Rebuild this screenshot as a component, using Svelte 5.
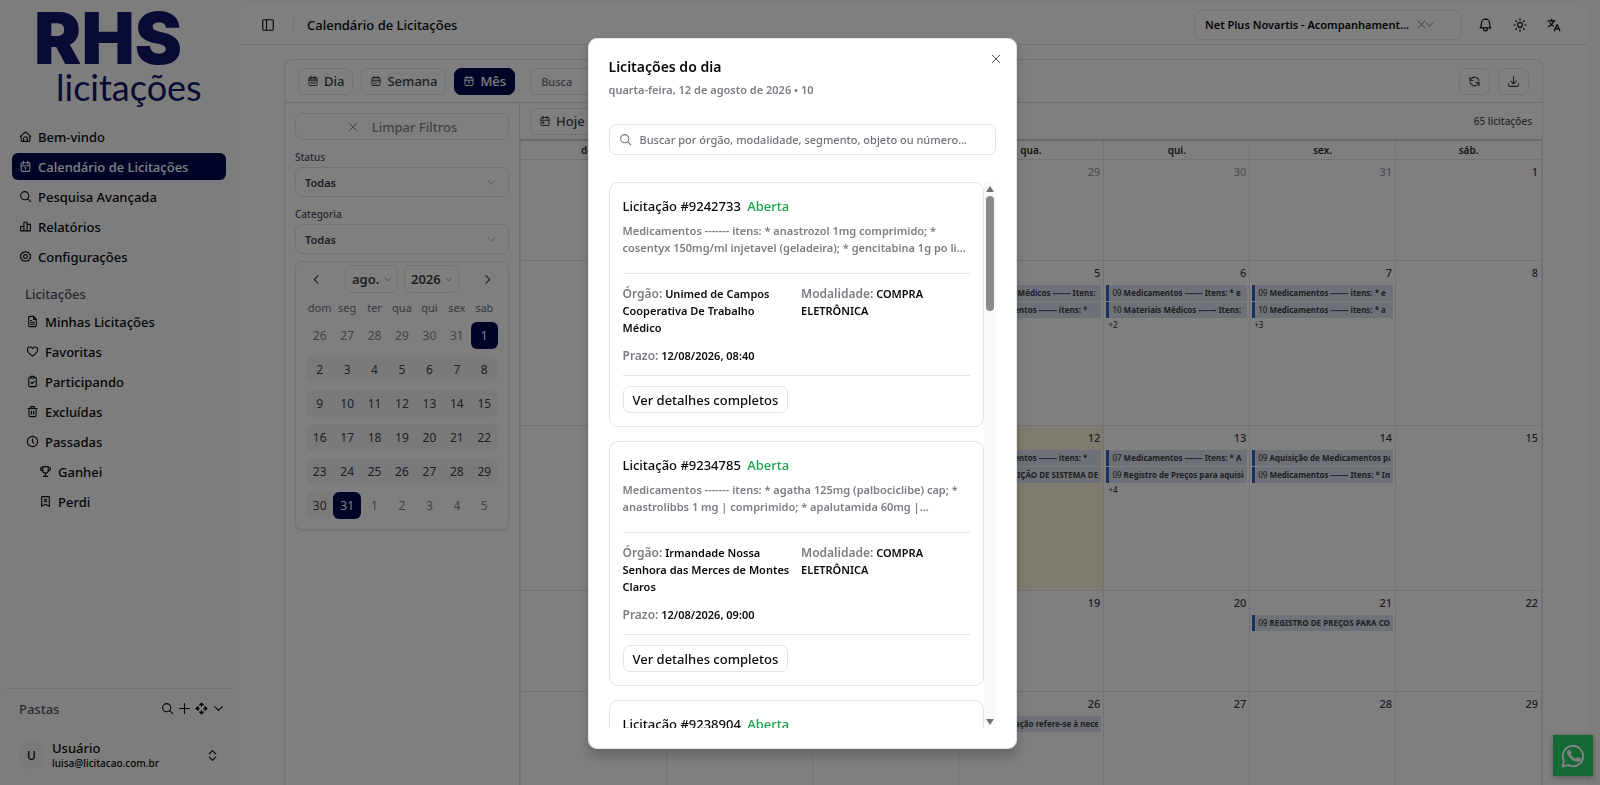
<script lang="ts">
  interface Bid {
    id: string;
    status: string;
    summary: string;
    agency: string;
    modality: string;
    deadline: string;
  }

  interface Day {
    n: number;
    out?: boolean;
    today?: boolean;
    events?: string[];
    more?: number;
  }

  const icons: Record<string, string> = {
    home: 'M4 10.5 12 3.5l8 7V19a2 2 0 0 1-2 2H6a2 2 0 0 1-2-2zM2.500 12 4 10.500M21.500 12 20 10.500M8.500 21v-5a3.500 3.500 0 0 1 7 0v5',
    calendar: 'M6 5h12a2 2 0 0 1 2 2v12a2 2 0 0 1-2 2H6a2 2 0 0 1-2-2V7a2 2 0 0 1 2-2zM8 2.500v5M16 2.500v5M4 10.500h16M12 14v3M11 14h1.500',
    day: 'M6 5h12a2 2 0 0 1 2 2v12a2 2 0 0 1-2 2H6a2 2 0 0 1-2-2V7a2 2 0 0 1 2-2zM8 2.500v4M16 2.500v4M4 8h16M4 10.500h16M8.500 14v3M12 14v3M15.500 14v3',
    week: 'M6 5h12a2 2 0 0 1 2 2v12a2 2 0 0 1-2 2H6a2 2 0 0 1-2-2V7a2 2 0 0 1 2-2zM8 2.500v5M16 2.500v5M4 10.500h16M7.500 14h1M11.500 14h1M15.500 14h1M7.500 17.500h1M11.500 17.500h1',
    today: 'M6 5h12a2 2 0 0 1 2 2v12a2 2 0 0 1-2 2H6a2 2 0 0 1-2-2V7a2 2 0 0 1 2-2zM8 2.500v5M16 2.500v5M4 10.500h16M8 14h2v2.500H8z',
    search: 'M10.500 3a7.500 7.500 0 1 1 0 15 7.500 7.500 0 0 1 0-15zM16 16l5.500 5.500',
    chart: 'M3 12h6v8H3zM9 4h6v16H9zM15 8h6v12h-6z',
    gear: 'M12 2.500l2.600 2 3.200-.3 1 3.100 2.700 1.800-1 2.900 1 2.900-2.700 1.800-1 3.100-3.200-.3-2.600 2-2.600-2-3.200.3-1-3.100-2.700-1.800 1-2.900-1-2.900 2.700-1.800 1-3.100 3.200.3zM12 8.500a3.500 3.500 0 1 1 0 7 3.500 3.500 0 0 1 0-7z',
    file: 'M14 2.500H7a2 2 0 0 0-2 2v15a2 2 0 0 0 2 2h10a2 2 0 0 0 2-2v-12zM14 2.500V8h5M8.500 10h2M8.500 13.500h7M8.500 17h7',
    heart: 'M12 20.500C5 15.500 2.500 12.500 2.500 8.800A5 5 0 0 1 12 6.500a5 5 0 0 1 9.500 2.300C21.500 12.500 19 15.500 12 20.500z',
    clipboard: 'M8.500 4H7a2 2 0 0 0-2 2v13.500a2 2 0 0 0 2 2h10a2 2 0 0 0 2-2V6a2 2 0 0 0-2-2h-1.500M9 2.500h6V6H9zM9 13.500l2.200 2.200 4-4',
    trash: 'M3.500 6.500h17M8.500 6V3h7v3M5.500 7v12.500a2 2 0 0 0 2 2h9a2 2 0 0 0 2-2V7M10 11v6M14 11v6',
    clock: 'M12 2.500a9.500 9.500 0 1 1 0 19 9.500 9.500 0 0 1 0-19zM12 7v5.500l2.500 3',
    trophy: 'M7 3h10v7a5 5 0 0 1-10 0zM7 5H3v2a4 4 0 0 0 4 4M17 5h4v2a4 4 0 0 1-4 4M12 15v5M8 21h8',
    bookmark: 'M5 3h14v18l-7-4-7 4zM9.500 7.500l5 5M14.500 7.500l-5 5',
    plus: 'M12 3v18M3 12h18',
    move: 'M12 2v6M12 16v6M2 12h6M16 12h6M8.500 5.500 12 2l3.500 3.500zM8.500 18.500 12 22l3.500-3.500zM5.500 8.500 2 12l3.500 3.500zM18.500 8.500 22 12l-3.500 3.500z',
    down: 'M5 8.500l7 7 7-7',
    left: 'M15 5l-7 7 7 7',
    right: 'M9 5l7 7-7 7',
    updown: 'M6 9l6-6 6 6M6 15l6 6 6-6',
    close: 'M4.500 4.500l15 15M19.500 4.500l-15 15',
    panel: 'M5 3h14a2 2 0 0 1 2 2v14a2 2 0 0 1-2 2H5a2 2 0 0 1-2-2V5a2 2 0 0 1 2-2zM9.500 3v18',
    bell: 'M3.500 17.500h17c-1.500-1.700-2-3.500-2-7.500a6.500 6.500 0 0 0-13 0c0 4-.5 5.800-2 7.500zM9 18v1a3 3 0 0 0 6 0v-1',
    sun: 'M12 8a4 4 0 1 1 0 8 4 4 0 0 1 0-8zM12 1.500v2.500M12 20v2.500M1.500 12H4M20 12h2.500M4.600 4.600l1.700 1.700M17.700 17.700l1.700 1.700M4.600 19.400l1.700-1.700M17.700 6.300l1.700-1.700',
    translate: 'M2 5h12M8 2v3M11.500 5C10 10 7 13 2.500 15M5 8c1.500 3 4 5 6.500 6M12.500 22l4.700-11 4.800 11M14 18.500h6.500',
    refresh: 'M20 11A8 8 0 0 0 5.500 7.500L3.500 10M3.500 4.500V10H9M4 13a8 8 0 0 0 14.500 3.500l2-2.500M20.500 19.500V14H15',
    download: 'M12 3v13M7 11.500l5 5 5-5M3 16v3a2 2 0 0 0 2 2h14a2 2 0 0 0 2-2v-3',
  };

  const mainNav = [
    { icon: 'home', label: 'Bem-vindo' },
    { icon: 'calendar', label: 'Calendário de Licitações', active: true },
    { icon: 'search', label: 'Pesquisa Avançada' },
    { icon: 'chart', label: 'Relatórios' },
    { icon: 'gear', label: 'Configurações' },
  ];

  const bidNav = [
    { icon: 'file', label: 'Minhas Licitações' },
    { icon: 'heart', label: 'Favoritas' },
    { icon: 'clipboard', label: 'Participando' },
    { icon: 'trash', label: 'Excluídas' },
    { icon: 'clock', label: 'Passadas' },
    { icon: 'trophy', label: 'Ganhei', nested: true },
    { icon: 'bookmark', label: 'Perdi', nested: true },
  ];

  const folderActions = [
    { icon: 'search', label: 'Buscar pasta' },
    { icon: 'plus', label: 'Nova pasta' },
    { icon: 'move', label: 'Mover pasta' },
    { icon: 'down', label: 'Expandir pastas' },
  ];

  const views = [
    { icon: 'day', label: 'Dia' },
    { icon: 'week', label: 'Semana' },
    { icon: 'calendar', label: 'Mês' },
  ];

  const miniHead = ['dom', 'seg', 'ter', 'qua', 'qui', 'sex', 'sab'];
  const monthHead = ['dom.', 'seg.', 'ter.', 'qua.', 'qui.', 'sex.', 'sáb.'];

  // six weeks starting on Sunday, 26 July 2026
  const start = new Date(2026, 6, 26);
  const miniWeeks = Array.from({ length: 6 }, (_, w) =>
    Array.from({ length: 7 }, (_, d) => {
      const date = new Date(start.getFullYear(), start.getMonth(), start.getDate() + w * 7 + d);
      const n = date.getDate();
      const out = date.getMonth() !== 7;
      return { n, out, edge: !out && (n === 1 || n === 31) };
    }),
  );

  const plain = (from: number, to: number): Day[] =>
    Array.from({ length: to - from + 1 }, (_, i) => ({ n: from + i }));

  const weeks: { tall?: boolean; days: Day[] }[] = [
    { days: [...plain(26, 31).map((d) => ({ ...d, out: true })), { n: 1 }] },
    {
      tall: true,
      days: [
        ...plain(2, 4),
        { n: 5, events: ['09 Materiais Médicos ------- Itens: *', '09 Medicamentos ------- itens: *'] },
        { n: 6, events: ['09 Medicamentos ------- Itens: * e', '10 Materiais Médicos ------- Itens: *'], more: 2 },
        { n: 7, events: ['09 Medicamentos ------- itens: * e', '10 Medicamentos ------- itens: * a'], more: 3 },
        { n: 8 },
      ],
    },
    {
      tall: true,
      days: [
        ...plain(9, 11),
        { n: 12, today: true, events: ['08 Medicamentos ------- itens: *', '09 NA AQUISIÇÃO DE SISTEMA DE'] },
        { n: 13, events: ['07 Medicamentos ------- Itens: * A', '09 Registro de Preços para aquisição'], more: 4 },
        { n: 14, events: ['09 Aquisição de Medicamentos para', '09 Medicamentos ------- Itens: * Im'] },
        { n: 15 },
      ],
    },
    { days: [...plain(16, 20), { n: 21, events: ['09 REGISTRO DE PREÇOS PARA CONTRATAÇÃO'] }, { n: 22 }] },
    { days: [...plain(23, 25), { n: 26, events: ['09 A contratação refere-se à necessidade'] }, ...plain(27, 29)] },
  ];

  const bids: Bid[] = [
    {
      id: '9242733',
      status: 'Aberta',
      summary: 'Medicamentos ------- itens: * anastrozol 1mg comprimido; * cosentyx 150mg/ml injetavel (geladeira); * gencitabina 1g po li...',
      agency: 'Unimed de Campos Cooperativa De Trabalho Médico',
      modality: 'COMPRA ELETRÔNICA',
      deadline: '12/08/2026, 08:40',
    },
    {
      id: '9234785',
      status: 'Aberta',
      summary: 'Medicamentos ------- itens: * agatha 125mg (palbociclibe) cap; * anastrolibbs 1 mg | comprimido; * apalutamida 60mg |...',
      agency: 'Irmandade Nossa Senhora das Merces de Montes Claros',
      modality: 'COMPRA ELETRÔNICA',
      deadline: '12/08/2026, 09:00',
    },
    {
      id: '9238904',
      status: 'Aberta',
      summary: '',
      agency: '',
      modality: '',
      deadline: '',
    },
  ];

  let view = $state('Mês');
  let open = $state(true);
  let query = $state('');

  let visible = $derived(
    bids.filter((b) =>
      [b.id, b.summary, b.agency, b.modality].some((s) => s.toLowerCase().includes(query.toLowerCase())),
    ),
  );
</script>

{#snippet icon(name: string)}
  <svg class="icon" viewBox="0 0 24 24" fill="none" stroke="currentColor" stroke-width="2" stroke-linejoin="round" stroke-linecap="round" aria-hidden="true">
    <path d={icons[name]} />
  </svg>
{/snippet}

<div class="app">
  <aside class="sidebar">
    <div class="logo">
      <span class="logo-main">RHS</span>
      <span class="logo-sub">licitações</span>
    </div>

    <nav class="nav">
      {#each mainNav as item}
        <a href="#{item.icon}" class="nav-item" class:active={item.active}>
          {@render icon(item.icon)}
          {item.label}
        </a>
      {/each}
    </nav>

    <div class="nav-title">Licitações</div>
    <nav class="nav sub">
      {#each bidNav as item}
        <a href="#{item.icon}" class="nav-item" class:nested={item.nested}>
          {@render icon(item.icon)}
          {item.label}
        </a>
      {/each}
    </nav>

    <div class="folders">
      <span class="folders-title">Pastas</span>
      {#each folderActions as action}
        <button class="bare" aria-label={action.label}>{@render icon(action.icon)}</button>
      {/each}
    </div>

    <button class="user">
      <span class="avatar">U</span>
      <span class="user-text">
        <span class="user-name">Usuário</span>
        <span class="user-mail">luisa@licitacao.com.br</span>
      </span>
      {@render icon('updown')}
    </button>
  </aside>

  <main class="main">
    <header class="topbar">
      <button class="bare" aria-label="Alternar menu">{@render icon('panel')}</button>
      <span class="sep"></span>
      <h1>Calendário de Licitações</h1>
      <div class="profile">
        <select aria-label="Perfil">
          <option>Net Plus Novartis - Acompanhament...</option>
        </select>
        <button class="bare clear" aria-label="Limpar perfil">{@render icon('close')}</button>
        <span class="profile-caret">{@render icon('down')}</span>
      </div>
      <button class="bare big" aria-label="Notificações">{@render icon('bell')}</button>
      <button class="bare" aria-label="Tema">{@render icon('sun')}</button>
      <button class="bare" aria-label="Idioma">{@render icon('translate')}</button>
    </header>

    <section class="board">
      <div class="toolbar">
        {#each views as v}
          <button class="btn" class:primary={view === v.label} onclick={() => (view = v.label)}>
            {@render icon(v.icon)}
            {v.label}
          </button>
        {/each}
        <input class="search" type="text" placeholder="Busca" aria-label="Busca" />
        <span class="grow"></span>
        <button class="btn square" aria-label="Atualizar">{@render icon('refresh')}</button>
        <button class="btn square" aria-label="Baixar">{@render icon('download')}</button>
      </div>

      <div class="board-body">
        <div class="filters">
          <button class="btn reset">{@render icon('close')} Limpar Filtros</button>

          {#each ['Status', 'Categoria'] as name}
            <div class="field">
              <label for={name}>{name}</label>
              <div class="select">
                <select id={name}>
                  <option>Todas</option>
                </select>
                {@render icon('down')}
              </div>
            </div>
          {/each}

          <div class="mini">
            <div class="mini-nav">
              <button class="bare" aria-label="Mês anterior">{@render icon('left')}</button>
              <div class="select small">
                <select aria-label="Mês"><option>ago.</option></select>
                {@render icon('down')}
              </div>
              <div class="select small">
                <select aria-label="Ano"><option>2026</option></select>
                {@render icon('down')}
              </div>
              <button class="bare" aria-label="Próximo mês">{@render icon('right')}</button>
            </div>
            <table class="mini-table">
              <thead>
                <tr>
                  {#each miniHead as d}
                    <th>{d}</th>
                  {/each}
                </tr>
              </thead>
              <tbody>
                {#each miniWeeks as week}
                  <tr>
                    {#each week as day}
                      <td>
                        <button class="mini-day" class:out={day.out} class:edge={day.edge}>{day.n}</button>
                      </td>
                    {/each}
                  </tr>
                {/each}
              </tbody>
            </table>
          </div>
        </div>

        <div class="month">
          <div class="month-bar">
            <button class="btn">{@render icon('today')} Hoje</button>
            <span class="count">65 licitações</span>
          </div>
          <table class="month-table">
            <thead>
              <tr>
                {#each monthHead as d}
                  <th>{d}</th>
                {/each}
              </tr>
            </thead>
            <tbody>
              {#each weeks as week}
                <tr class:tall={week.tall}>
                  {#each week.days as day}
                    <td class:today={day.today}>
                      <div class="day-n" class:out={day.out}>{day.n}</div>
                      {#each day.events ?? [] as ev}
                        <div class="event"><span>{ev.slice(0, 2)}</span>{ev.slice(2)}</div>
                      {/each}
                      {#if day.more}
                        <div class="more">+{day.more}</div>
                      {/if}
                    </td>
                  {/each}
                </tr>
              {/each}
            </tbody>
          </table>
        </div>
      </div>
    </section>
  </main>

  <a class="whatsapp" href="#whatsapp" aria-label="WhatsApp">
    <svg viewBox="0 0 24 24" fill="none" stroke="currentColor" stroke-width="2" stroke-linejoin="round" aria-hidden="true">
      <path d="M1.500 22.500 3 17A10.200 10.200 0 1 1 7 21z" />
      <path stroke="none" fill="currentColor" d="M8.800 6.400c-.3-.6-.6-.6-.9-.6-.8 0-1.900.9-1.900 2.600s1.200 3.300 1.400 3.500c.2.300 2.400 3.800 5.900 5.100 2.900 1.100 3.500.9 4.100.8.700-.1 2-.8 2.300-1.600.3-.8.3-1.500.2-1.600-.3-.4-2.800-1.600-3.200-1.600-.6 0-1.100 1.800-1.700 1.800-.5 0-4.300-2-5.300-4.700 0-.4 1.100-1.100 1-1.700z" />
    </svg>
  </a>
</div>

{#if open}
  <div class="overlay">
    <div class="modal" role="dialog" aria-modal="true" aria-labelledby="modal-title">
      <button class="bare modal-close" aria-label="Fechar" onclick={() => (open = false)}>
        {@render icon('close')}
      </button>
      <h2 id="modal-title">Licitações do dia</h2>
      <p class="modal-sub">quarta-feira, 12 de agosto de 2026 • 10</p>

      <label class="modal-search">
        {@render icon('search')}
        <input
          type="text"
          bind:value={query}
          aria-label="Buscar licitações"
          placeholder="Buscar por órgão, modalidade, segmento, objeto ou número..."
        />
      </label>

      <div class="modal-body">
        <div class="list">
          {#each visible as bid}
            <article class="card">
              <h3>Licitação #{bid.id} <span class="status">{bid.status}</span></h3>
              <p class="summary">{bid.summary}</p>
              <div class="details">
                <div><span class="key">Órgão:</span> {bid.agency}</div>
                <div><span class="key">Modalidade:</span> {bid.modality}</div>
                <div><span class="key">Prazo:</span> {bid.deadline}</div>
              </div>
              <button class="btn more-btn">Ver detalhes completos</button>
            </article>
          {/each}
        </div>
        <div class="scrollbar" aria-hidden="true">
          <svg viewBox="0 0 8 6"><path d="M4 0l4 6H0z" /></svg>
          <div class="track"><div class="thumb"></div></div>
          <svg viewBox="0 0 8 6"><path d="M4 6l4-6H0z" /></svg>
        </div>
      </div>
    </div>
  </div>
{/if}

<style>
  :global(body) {
    font-family: 'Noto Sans', 'Open Sans', sans-serif;
    font-size: 13px;
    font-weight: 500;
    color: #09090b;
    background: #fafafa;
  }

  * {
    box-sizing: border-box;
  }

  h1,
  h2,
  h3,
  p {
    margin: 0;
  }

  button,
  input,
  select {
    font: inherit;
    color: inherit;
  }

  a {
    color: inherit;
    text-decoration: none;
  }

  .icon {
    width: 13px;
    height: 13px;
    flex-shrink: 0;
  }

  .bare {
    display: flex;
    padding: 0;
    border: none;
    background: none;
    cursor: pointer;
  }

  .app {
    display: flex;
    height: 100vh;
    overflow: hidden;
    background: #fafafa;
  }

  .sidebar {
    display: flex;
    flex-direction: column;
    width: 240px;
    flex-shrink: 0;
    padding: 0 7px 3px 5px;
  }

  .logo {
    display: flex;
    flex-direction: column;
    height: 123px;
    padding-left: 29px;
    color: #14166a;
  }

  .logo-main {
    font-family: Inter, sans-serif;
    font-size: 71px;
    font-weight: 900;
    line-height: 76px;
  }

  .logo-sub {
    padding-left: 22px;
    font-family: Lato, sans-serif;
    font-size: 36px;
    font-weight: 400;
    line-height: 22px;
  }

  .nav {
    display: flex;
    flex-direction: column;
    gap: 3px;
    padding: 0 7px;
  }

  .nav-item {
    display: flex;
    align-items: center;
    gap: 6px;
    height: 27px;
    padding: 0 7px;
    border-radius: 6px;
  }

  .nav-item.active {
    background: #000a50;
    color: #fff;
  }

  .nav.sub {
    padding-left: 14px;
  }

  .nav-item.nested {
    margin-left: 13px;
  }

  .nav-title {
    padding: 14px 20px 4px;
    line-height: 20px;
    color: #52525b;
  }

  .folders {
    display: flex;
    align-items: center;
    gap: 4px;
    margin-top: auto;
    height: 40px;
    padding: 0 8px 0 14px;
    border-top: 1px solid #e4e4e7;
  }

  .folders-title {
    flex: 1;
    color: #52525b;
  }

  .user {
    display: flex;
    align-items: center;
    gap: 7px;
    height: 54px;
    padding: 0 14px 0 13px;
    border: none;
    background: none;
    text-align: left;
  }

  .avatar {
    display: grid;
    place-items: center;
    width: 27px;
    height: 27px;
    border-radius: 7px;
    background: #f4f4f5;
    font-size: 12px;
  }

  .user-text {
    display: flex;
    flex: 1;
    flex-direction: column;
  }

  .user-name {
    line-height: 17px;
  }

  .user-mail {
    font-size: 10px;
    line-height: 13px;
  }

  .main {
    display: flex;
    flex: 1;
    flex-direction: column;
    min-width: 0;
    margin: 5px 13px 0 0;
    border-radius: 8px 8px 0 0;
    background: #fff;
  }

  .topbar {
    display: flex;
    align-items: center;
    gap: 20px;
    height: 40px;
    padding: 0 26px 0 21px;
    border-bottom: 1px solid #e4e4e7;
  }

  .topbar .sep {
    width: 1px;
    height: 14px;
    margin: 0 -7px 0 -2px;
    background: #e4e4e7;
  }

  h1 {
    flex: 1;
    font-size: 13px;
    font-weight: 500;
  }

  .topbar .bare .icon {
    width: 14px;
    height: 14px;
  }

  .topbar .big .icon {
    width: 15px;
    height: 15px;
  }

  .profile {
    display: flex;
    align-items: center;
    width: 268px;
    height: 30px;
    margin-right: -4px;
    padding: 0 26px 0 10px;
    border: 1px solid #e4e4e7;
    border-radius: 7px;
    font-size: 11px;
    font-weight: 600;
  }

  .profile select {
    flex: 1;
    min-width: 0;
    padding: 0;
    border: none;
    background: none;
    appearance: none;
  }

  .profile .clear .icon,
  .profile-caret .icon {
    width: 11px;
    height: 11px;
    color: #71717a;
  }

  .profile-caret {
    display: flex;
    margin-left: -3px;
  }

  .board {
    display: flex;
    flex: 1;
    flex-direction: column;
    min-height: 0;
    margin: 14px 44px 0;
    border: 1px solid #e4e4e7;
    border-bottom: none;
    border-radius: 8px 8px 0 0;
    color: #3f3f46;
  }

  .toolbar {
    display: flex;
    align-items: center;
    gap: 8px;
    height: 43px;
    padding: 0 13px;
    border-bottom: 1px solid #dcdce0;
  }

  .btn {
    display: flex;
    align-items: center;
    justify-content: center;
    gap: 5px;
    height: 27px;
    padding: 0 8px;
    border: 1px solid #e4e4e7;
    border-radius: 7px;
    background: #fff;
    cursor: pointer;
  }

  .btn .icon {
    width: 12px;
    height: 12px;
  }

  .btn.primary {
    border-color: #000a50;
    background: #000a50;
    color: #fff;
  }

  .btn.square {
    width: 31px;
    padding: 0;
  }

  .btn.square .icon {
    width: 13px;
    height: 13px;
  }

  .grow {
    flex: 1;
  }

  .search {
    width: 200px;
    height: 27px;
    margin-left: 7px;
    padding: 0 10px;
    border: 1px solid #e4e4e7;
    border-radius: 7px;
    background: none;
    font-size: 11px;
  }

  .search::placeholder {
    color: #71717a;
  }

  .board-body {
    display: flex;
    flex: 1;
    min-height: 0;
  }

  .filters {
    display: flex;
    flex-direction: column;
    width: 234px;
    flex-shrink: 0;
    padding: 10px;
  }

  .reset {
    gap: 13px;
    color: #85858c;
  }

  .field {
    display: flex;
    flex-direction: column;
    padding-top: 8px;
  }

  .field label {
    font-size: 10px;
    line-height: 19px;
    color: #52525b;
  }

  .select {
    display: flex;
    align-items: center;
    height: 30px;
    padding: 0 11px 0 9px;
    border: 1px solid #e4e4e7;
    border-radius: 7px;
    font-size: 11px;
    font-weight: 600;
  }

  .select select {
    flex: 1;
    min-width: 0;
    padding: 0;
    border: none;
    background: none;
    appearance: none;
  }

  .select .icon {
    width: 11px;
    height: 11px;
    color: #a1a1aa;
  }

  .select.small {
    gap: 3px;
    height: 28px;
    padding: 0 5px 0 6px;
    font-size: 13px;
  }

  .select.small .icon {
    width: 9px;
    height: 9px;
    color: #71717a;
  }

  .mini {
    margin-top: 7px;
    padding: 3px 10px;
    border: 1px solid #e4e4e7;
    border-radius: 7px;
    box-shadow: 0 1px 2px rgba(0, 0, 0, 0.1);
  }

  .mini-nav {
    display: flex;
    align-items: center;
    justify-content: center;
    gap: 6px;
    padding: 0 4px;
  }

  .mini-nav .bare:first-child {
    margin-right: auto;
  }

  .mini-nav .bare:last-child {
    margin-left: auto;
  }

  .mini-table {
    width: 100%;
    border-spacing: 0 7px;
    table-layout: fixed;
    font-size: 12px;
    font-weight: 400;
  }

  .mini-table th {
    padding: 0;
    font-weight: 400;
    font-size: 11px;
    line-height: 15px;
    color: #71717a;
  }

  .mini-table td {
    padding: 0;
    background: #f4f4f5;
  }

  .mini-table td:first-child {
    border-radius: 7px 0 0 7px;
  }

  .mini-table td:last-child {
    border-radius: 0 7px 7px 0;
  }

  .mini-table td:has(.out) {
    background: none;
  }

  .mini-table td:has(.edge) {
    background: none;
  }

  .mini-day {
    width: 100%;
    height: 27px;
    padding: 0;
    border: none;
    border-radius: 6px;
    background: none;
  }

  .mini-day.out {
    color: #85858c;
  }

  .mini-day.edge {
    background: #000a50;
    color: #fff;
  }

  .month {
    display: flex;
    flex: 1;
    flex-direction: column;
    min-width: 0;
    border-left: 1px solid #dcdce0;
  }

  .month-bar {
    display: flex;
    align-items: center;
    justify-content: space-between;
    height: 36px;
    flex-shrink: 0;
    padding: 0 10px;
  }

  .count {
    font-size: 10px;
    color: #52525b;
  }

  .month-table {
    width: 100%;
    border-collapse: collapse;
    table-layout: fixed;
    font-size: 11px;
  }

  .month-table th,
  .month-table td {
    padding: 0;
    border: 1px solid #e6e6e9;
  }

  .month-table th {
    height: 19px;
    border-top: 2px solid #d4d4d8;
    font-size: 10px;
    font-weight: 600;
    color: #27272a;
  }

  .month-table td {
    height: 101px;
    padding: 4px 2px 0;
    vertical-align: top;
  }

  .month-table .tall td {
    height: 165px;
  }

  .month-table .today {
    background: #fff6dc;
  }

  .day-n {
    padding-right: 1px;
    line-height: 16px;
    text-align: right;
  }

  .day-n.out {
    color: #a1a1aa;
  }

  .event {
    height: 16px;
    margin-bottom: 1px;
    border-left: 3px solid #2e62c8;
    border-right: 3px solid #dde5f0;
    padding-left: 3px;
    background: #dde5f0;
    overflow: hidden;
    font-size: 8px;
    font-weight: 700;
    line-height: 16px;
    white-space: nowrap;
  }

  .day-n + .event {
    margin-top: 4px;
  }

  .event span {
    font-weight: 500;
  }

  .more {
    padding-left: 2px;
    font-size: 8px;
    line-height: 12px;
  }

  .whatsapp {
    position: fixed;
    right: 7px;
    bottom: 9px;
    display: grid;
    place-items: center;
    width: 40px;
    height: 41px;
    background: #25d366;
    box-shadow: 0 2px 6px rgba(0, 0, 0, 0.3);
    color: #fff;
  }

  .whatsapp svg {
    width: 24px;
    height: 24px;
  }

  .overlay {
    position: fixed;
    inset: 0;
    display: flex;
    justify-content: center;
    padding: 38px 20px 36px 24px;
    background: rgba(0, 0, 0, 0.5);
  }

  .modal {
    position: relative;
    display: flex;
    flex-direction: column;
    width: 100%;
    max-width: 429px;
    padding: 17px 20px 20px;
    border: 1px solid #e4e4e7;
    border-radius: 9px;
    background: #fff;
    box-shadow: 0 8px 12px rgba(0, 0, 0, 0.2);
  }

  .modal-close {
    position: absolute;
    top: 14px;
    right: 14px;
    color: #52525b;
  }

  .modal-close .icon {
    width: 12px;
    height: 12px;
  }

  h2 {
    font-size: 14px;
    font-weight: 600;
    line-height: 22px;
  }

  .modal-sub {
    font-size: 11px;
    font-weight: 600;
    line-height: 24px;
    color: #7c7c84;
  }

  .modal-search {
    display: flex;
    align-items: center;
    gap: 8px;
    height: 31px;
    flex-shrink: 0;
    margin: 22px 0 27px;
    padding: 0 9px;
    border: 1px solid #e4e4e7;
    border-radius: 7px;
    color: #71717a;
  }

  .modal-search input {
    flex: 1;
    min-width: 0;
    padding: 0;
    border: none;
    outline: none;
    background: none;
    font-size: 11px;
  }

  .modal-search input::placeholder {
    color: #71717a;
  }

  .modal-body {
    display: flex;
    flex: 1;
    min-height: 0;
  }

  .list {
    display: flex;
    flex: 1;
    flex-direction: column;
    gap: 14px;
    overflow: hidden;
  }

  .card {
    flex-shrink: 0;
    padding: 13px;
    border: 1px solid #e4e4e7;
    border-radius: 9px;
  }

  h3 {
    font-size: 13px;
    font-weight: 500;
    line-height: 20px;
  }

  .status {
    margin-left: 3px;
    color: #16a34a;
  }

  .summary {
    padding: 6px 0 17px;
    border-bottom: 1px solid #e4e4e7;
    font-size: 11px;
    font-weight: 600;
    line-height: 17px;
    color: #7c7c84;
  }

  .details {
    display: grid;
    grid-template-columns: 1fr 1fr;
    gap: 11px 10px;
    padding: 11px 0 11px;
    border-bottom: 1px solid #e4e4e7;
    font-size: 11px;
    font-weight: 600;
    line-height: 17px;
  }

  .key {
    font-size: 12px;
    line-height: 16px;
    color: #7c7c84;
  }

  .more-btn {
    margin-top: 10px;
    padding: 0 9px;
  }

  .scrollbar {
    display: flex;
    flex-direction: column;
    align-items: center;
    width: 12px;
    padding: 4px 0 3px;
    background: #fafafa;
  }

  .scrollbar svg {
    width: 8px;
    height: 6px;
    fill: #71717a;
  }

  .track {
    flex: 1;
    padding-top: 4px;
  }

  .thumb {
    width: 8px;
    height: 22%;
    border-radius: 4px;
    background: #8b8b8b;
  }
</style>
